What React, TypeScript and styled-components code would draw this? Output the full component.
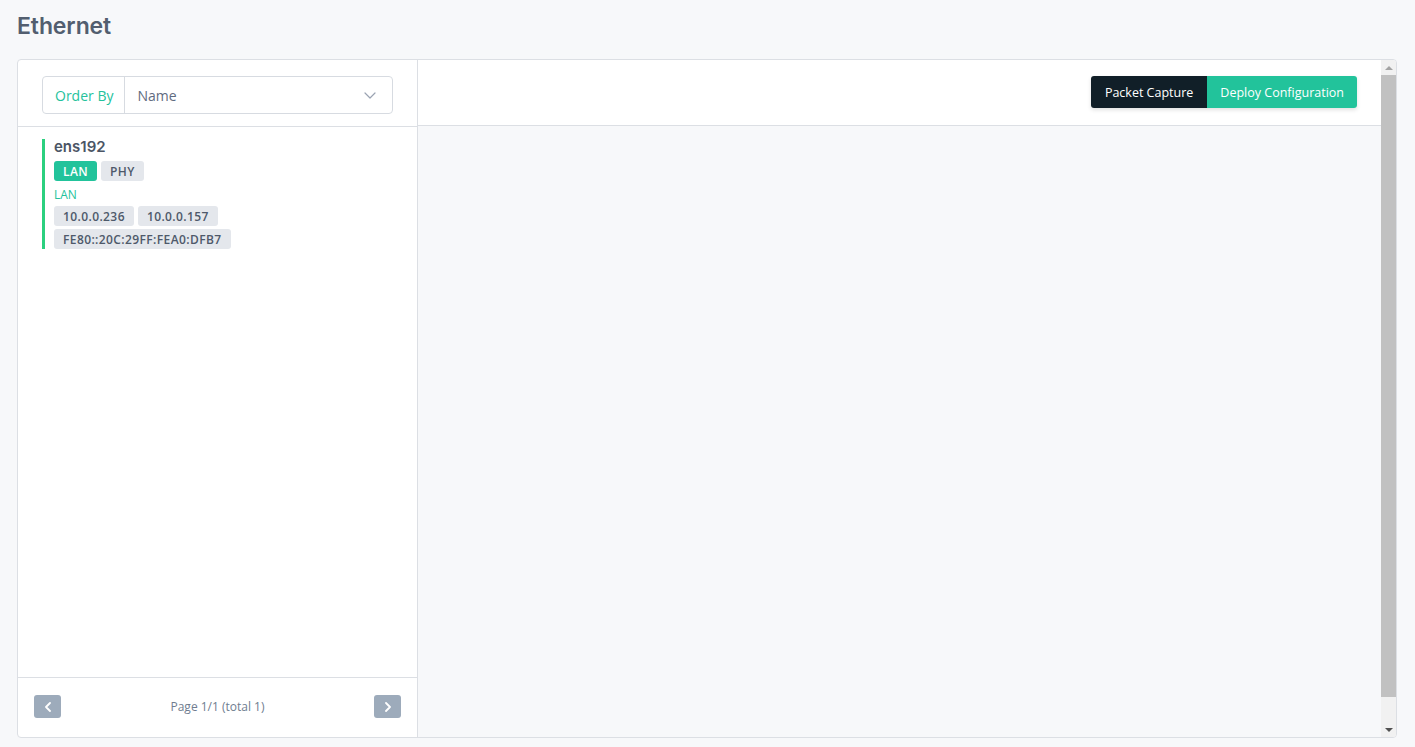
import { createGlobalStyle, styled } from 'styled-components';

const GlobalStyle = createGlobalStyle`
  html, body {
    margin: 0;
    padding: 0;
    background: #f7f8fa;
    font-family: "Open Sans", "Noto Sans", sans-serif;
  }
`;

const Page = styled.div`
  padding: 10px 18px 9px 17px;
  box-sizing: border-box;
  height: 747px;
  display: flex;
  flex-direction: column;
`;

const Title = styled.h1`
  margin: 0 0 17px;
  height: 32px;
  line-height: 32px;
  font-family: Inter, "Noto Sans", sans-serif;
  font-size: 23px;
  font-weight: 600;
  color: #525e6f;
  letter-spacing: -0.1px;
`;

const Card = styled.div`
  flex: 1;
  background: #fff;
  border: 1px solid #dcdfe4;
  border-radius: 4px;
  overflow: hidden;
  display: grid;
  grid-template-columns: 400px 1fr 15px;
`;

const Side = styled.div`
  display: flex;
  flex-direction: column;
  border-right: 1px solid #dcdfe4;
`;

const SideHeader = styled.div`
  height: 67px;
  box-sizing: border-box;
  padding: 16px 24px 0 24px;
  border-bottom: 1px solid #dcdfe4;
`;

const OrderBy = styled.div`
  display: flex;
  height: 38px;
  box-sizing: border-box;
  border: 1px solid #d7dbe1;
  border-radius: 4px;
`;

const Addon = styled.div`
  display: flex;
  align-items: center;
  padding: 0 11px 0 12px;
  border-right: 1px solid #d7dbe1;
  color: #25c29c;
  font-size: 14px;
`;

const Select = styled.div`
  flex: 1;
  display: flex;
  align-items: center;
  justify-content: space-between;
  padding: 0 16px 0 12px;
  color: #5f6b80;
  font-size: 14px;
`;

const List = styled.div`
  flex: 1;
  padding: 12px 24px;
`;

const Item = styled.div`
  border-left: 3px solid #2bd07f;
  padding: 0 0 0 9px;
  display: flex;
  flex-direction: column;
  align-items: flex-start;
`;

const Name = styled.div`
  font-family: Inter, "Noto Sans", sans-serif;
  font-weight: 600;
  font-size: 15px;
  color: #4b5565;
  line-height: 16px;
`;

const Row = styled.div<{ $gap?: number }>`
  display: flex;
  gap: 4px;
  margin-top: ${p => p.$gap ?? 3}px;
`;

const Badge = styled.span<{ $active?: boolean }>`
  display: inline-flex;
  align-items: center;
  height: 20px;
  padding: 0 9px;
  border-radius: 3px;
  font-size: 12px;
  font-weight: 600;
  letter-spacing: 0.4px;
  background: ${p => (p.$active ? '#22c39b' : '#e4e7ec')};
  color: ${p => (p.$active ? '#fff' : '#4e596a')};
`;

const Zone = styled.div`
  color: #25c29c;
  font-size: 12px;
  margin-top: 6px;
  line-height: 16px;
`;

const Footer = styled.div`
  height: 60px;
  box-sizing: border-box;
  border-top: 1px solid #dcdfe4;
  display: flex;
  align-items: center;
  justify-content: space-between;
  padding: 0 16px 2px 16px;
`;

const PageBtn = styled.button`
  width: 27px;
  height: 23px;
  border: none;
  border-radius: 3px;
  background: #9dabbb;
  color: #fff;
  display: flex;
  align-items: center;
  justify-content: center;
  padding: 0;
`;

const PageText = styled.span`
  font-size: 12px;
  color: #6f7d90;
`;

const Main = styled.div`
  background: #f7f8fa;
  display: flex;
  flex-direction: column;
`;

const MainHeader = styled.div`
  height: 66px;
  box-sizing: border-box;
  background: #fff;
  border-bottom: 1px solid #dcdfe4;
  display: flex;
  justify-content: flex-end;
  padding: 16px 24px 0 0;
`;

const BtnGroup = styled.div`
  display: flex;
  height: 32px;
  border-radius: 3px;
  overflow: hidden;
  box-shadow: 0 2px 4px rgba(0, 0, 0, 0.12);
`;

const Btn = styled.button<{ $dark?: boolean }>`
  border: none;
  height: 32px;
  padding: 0 ${p => (p.$dark ? 14 : 13)}px 0 ${p => (p.$dark ? 14 : 13)}px;
  font-family: "Open Sans", "Noto Sans", sans-serif;
  font-size: 12.5px;
  color: #fff;
  background: ${p => (p.$dark ? '#111f28' : '#22c39b')};
`;

const Scrollbar = styled.div`
  background: #f1f1f1;
  display: flex;
  flex-direction: column;
  align-items: center;
`;

const ScrollArrow = styled.div<{ $down?: boolean }>`
  height: 15px;
  width: 15px;
  display: flex;
  align-items: center;
  justify-content: center;
  &::after {
    content: '';
    border-left: 4px solid transparent;
    border-right: 4px solid transparent;
    ${p => (p.$down ? 'border-top: 4px solid #505050;' : 'border-bottom: 4px solid #a3a3a3;')}
  }
`;

const ScrollThumb = styled.div`
  width: 100%;
  height: 622px;
  background: #c1c1c1;
`;

const ScrollTrack = styled.div`
  flex: 1;
`;

const Chevron = ({ dir }: { dir: 'down' | 'left' | 'right' }) => {
  const d = dir === 'down' ? 'M1 1l5 5 5-5' : dir === 'left' ? 'M5 1L1 5l4 4' : 'M1 1l4 4-4 4';
  const w = dir === 'down' ? 12 : 6;
  const h = dir === 'down' ? 7 : 10;
  return (
    <svg width={w} height={h} viewBox={`0 0 ${w} ${h}`} fill="none">
      <path d={d} stroke={dir === 'down' ? '#9aa3b2' : '#fff'} strokeWidth={dir === 'down' ? 1.2 : 1.8} strokeLinecap="round" strokeLinejoin="round" />
    </svg>
  );
};

export default function App() {
  return (
    <>
      <GlobalStyle />
      <Page>
        <Title>Ethernet</Title>
        <Card>
          <Side>
            <SideHeader>
              <OrderBy>
                <Addon>Order By</Addon>
                <Select>
                  <span>Name</span>
                  <Chevron dir="down" />
                </Select>
              </OrderBy>
            </SideHeader>
            <List>
              <Item>
                <Name>ens192</Name>
                <Row $gap={6}>
                  <Badge $active>LAN</Badge>
                  <Badge>PHY</Badge>
                </Row>
                <Zone>LAN</Zone>
                <Row $gap={3}>
                  <Badge>10.0.0.236</Badge>
                  <Badge>10.0.0.157</Badge>
                </Row>
                <Row>
                  <Badge>FE80::20C:29FF:FEA0:DFB7</Badge>
                </Row>
              </Item>
            </List>
            <Footer>
              <PageBtn><Chevron dir="left" /></PageBtn>
              <PageText>Page 1/1 (total 1)</PageText>
              <PageBtn><Chevron dir="right" /></PageBtn>
            </Footer>
          </Side>
          <Main>
            <MainHeader>
              <BtnGroup>
                <Btn $dark>Packet Capture</Btn>
                <Btn>Deploy Configuration</Btn>
              </BtnGroup>
            </MainHeader>
          </Main>
          <Scrollbar>
            <ScrollArrow />
            <ScrollThumb />
            <ScrollTrack />
            <ScrollArrow $down />
          </Scrollbar>
        </Card>
      </Page>
    </>
  );
}
